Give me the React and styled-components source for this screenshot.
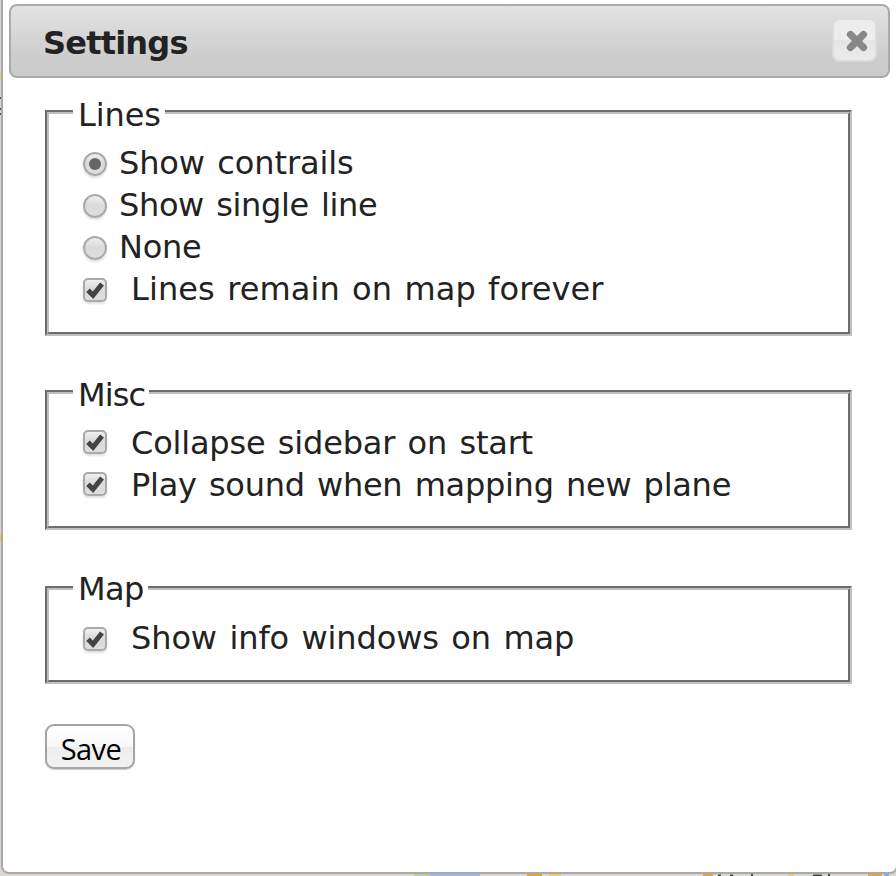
import React from 'react';
import styled, { createGlobalStyle } from 'styled-components';

const GlobalStyle = createGlobalStyle`
  body { margin: 0; overflow: hidden; }
  * { box-sizing: border-box; }
`;

const Page = styled.div`
  position: relative;
  width: 896px;
  height: 876px;
  padding: 0 0 0 1px;
  overflow: hidden;
  background: #d9d7d0;
`;

const MapStrip = styled.svg`
  position: absolute;
  left: 0;
  top: 0;
`;

const Dialog = styled.div`
  position: relative;
  width: 897px;
  height: 884px;
  margin-top: -10px;
  padding: 12px 7px 0 6px;
  border: 2px solid #aaa;
  border-radius: 8px;
  background: #fff;
  color: #222;
  font: 32px/42px 'DejaVu Sans', Verdana, sans-serif;
`;

const TitleBar = styled.header`
  display: flex;
  align-items: center;
  justify-content: space-between;
  width: 881px;
  height: 74px;
  padding: 0 11px 2px 32px;
  border: 2px solid #aaa;
  border-radius: 8px;
  background: linear-gradient(#e3e3e3, #cccccc 75%);
`;

const Title = styled.h1`
  margin: 0;
  padding-top: 5px;
  font-size: 32px;
  font-weight: bold;
  letter-spacing: -0.8px;
`;

const CloseButton = styled.button`
  display: grid;
  place-items: center;
  width: 45px;
  height: 44px;
  margin-top: -1px;
  padding: 3px 0 0 4px;
  border: 2px solid #dcdcdc;
  border-radius: 8px;
  background: linear-gradient(#ededed 50%, #e5e5e5 50%, #ebebeb);
`;

const Content = styled.form`
  display: flex;
  flex-direction: column;
  align-items: flex-start;
  padding: 16px 0 0 36px;
`;

const Group = styled.fieldset`
  width: 807px;
  height: ${(p) => p.$height}px;
  margin: 0 0 ${(p) => p.$gap}px;
  padding: ${(p) => p.$top}px 34px 0 24px;
  border: 4px groove #c0c0c0;
`;

const Legend = styled.legend`
  height: ${(p) => p.$height || 36}px;
  padding: 0 4px 0 5px;
  letter-spacing: ${(p) => p.$spacing}px;
`;

const Option = styled.label`
  display: flex;
  align-items: center;
  height: 42px;
  padding-left: 10px;
  gap: ${(p) => (p.$wide ? 24 : 12)}px;
  white-space: pre;
  letter-spacing: ${(p) => p.$spacing}px;
  word-spacing: ${(p) => p.$words ?? 2.4}px;
`;

const Marker = styled.span`
  display: grid;
  place-items: center;
  width: 24px;
  height: 24px;
  margin-top: ${(p) => (p.$raised ? -2 : 2)}px;
  border: 2px solid #a9a9a9;
  border-radius: ${(p) => (p.$round ? '50%' : '5px')};
  background: linear-gradient(#f0f0f0, #dadada 45%, #dedede);
  box-shadow: 0 2px 2px rgba(0, 0, 0, 0.12);
`;

const Dot = styled.span`
  width: 12px;
  height: 12px;
  border-radius: 50%;
  background: #666;
`;

const SaveButton = styled.button`
  width: 90px;
  height: 45px;
  padding: 5px 0 0 2px;
  border: 2px solid #a5a5a5;
  border-radius: 9px;
  background: linear-gradient(#fff, #f8f8f8 50%, #ededed 51%, #f3f3f3);
  box-shadow: 0 1px 1px rgba(0, 0, 0, 0.2);
  color: #000;
  font: 29px/32px 'Open Sans', 'Lucida Grande', sans-serif;
  letter-spacing: -0.6px;
`;

const Check = () => (
  <svg width="20" height="20" viewBox="0 0 20 20">
    <path d="M3 10.2l5 5L17 4" fill="none" stroke="#444" strokeWidth="5" />
  </svg>
);

const Radio = ({ checked, spacing, children }) => (
  <Option $spacing={spacing}>
    <Marker $round>{checked && <Dot />}</Marker>
    {children}
  </Option>
);

const Checkbox = ({ spacing, words, raised, children }) => (
  <Option $wide $spacing={spacing} $words={words}>
    <Marker $raised={raised}><Check /></Marker>
    {children}
  </Option>
);

export default function App() {
  return (
    <>
      <GlobalStyle />
      <Page>
        <MapStrip width="896" height="876">
          <path d="M414 875h16" stroke="#b9cc9c" strokeWidth="2" />
          <path d="M430 875h50" stroke="#9fb7ea" strokeWidth="2" />
          <path d="M527 875h15M703 875h10M868 875h14" stroke="#e6a23c" strokeWidth="2" />
          <path d="M549 875h12M788 875h6" stroke="#e9cb62" strokeWidth="2" />
          <path d="M884 875h5" stroke="#8aa9e8" strokeWidth="2" />
          <path d="M718 875.5h3M730 875.5h3M751 875h2M813 875.5h9M828 875h2" stroke="#444" strokeWidth="2" />
          <path d="M0 73v8M0 534v8" stroke="#e9cb62" strokeWidth="3" />
          <path d="M0 97v2M0 108v2M0 113v2" stroke="#555" strokeWidth="3" />
        </MapStrip>
        <Dialog>
          <TitleBar>
            <Title>Settings</Title>
            <CloseButton type="button" aria-label="Close">
              <svg width="24" height="24" viewBox="0 0 24 24">
                <path d="M5.5 5.5l13 13M18.5 5.5l-13 13" stroke="#888" strokeWidth="7.2" strokeLinecap="round" />
              </svg>
            </CloseButton>
          </TitleBar>
          <Content>
            <Group $height={242} $gap={38} $top={12}>
              <Legend $spacing={-0.1}>Lines</Legend>
              <Radio checked spacing={-0.11}>Show contrails</Radio>
              <Radio spacing={-0.35}>Show single line</Radio>
              <Radio spacing={-0.3}>None</Radio>
              <Checkbox spacing={0.1} words={2}>Lines remain on map forever</Checkbox>
            </Group>
            <Group $height={156} $gap={38} $top={12}>
              <Legend $spacing={-0.9}>Misc</Legend>
              <Checkbox raised spacing={-0.19}>Collapse sidebar on start</Checkbox>
              <Checkbox raised spacing={-0.27}>Play sound when mapping new plane</Checkbox>
            </Group>
            <Group $height={116} $gap={40} $top={9}>
              <Legend $height={40} $spacing={-0.6}>Map</Legend>
              <Checkbox spacing={-0.1}>Show info windows on map</Checkbox>
            </Group>
            <SaveButton type="button">Save</SaveButton>
          </Content>
        </Dialog>
      </Page>
    </>
  );
}
